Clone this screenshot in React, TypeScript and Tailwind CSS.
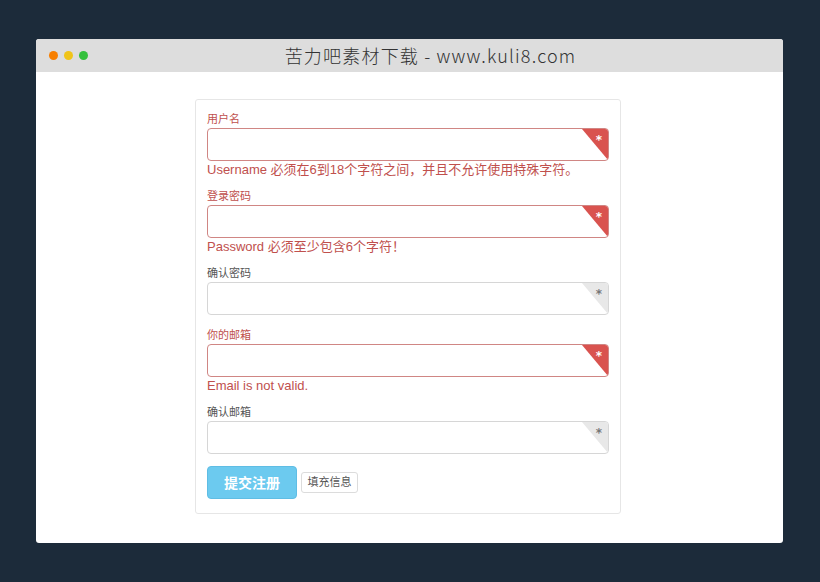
import React from "react";

const font = { fontFamily: '"Liberation Sans",Arial,"Noto Sans CJK SC",sans-serif' };

function Field({ label, error, required }: { label: string; error?: string; required: boolean }) {
  const bad = !!error;
  return (
    <div className="mb-[13px]">
      <div className={`text-[11px] leading-[14px] mb-[2px] ${bad ? "text-[#c0504d]" : "text-[#555]"}`}>{label}</div>
      <div
        className={`relative h-[33px] rounded-[4px] border bg-white overflow-hidden ${
          bad ? "border-[#d08684]" : "border-[#d6d6d6]"
        }`}
      >
        <div
          className={`absolute right-0 top-0 w-[26px] h-[31px] ${bad ? "bg-[#d9534f]" : "bg-[#e8e8e8]"}`}
          style={{ clipPath: "polygon(0 0,100% 0,100% 100%)" }}
        />
        <div
          className={`absolute right-[6px] top-[5px] text-[12px] leading-[12px] font-bold ${
            bad ? "text-white" : "text-[#777]"
          }`}
          style={{ fontFamily: '"DejaVu Sans",sans-serif' }}
        >
          *
        </div>
      </div>
      {error && <div className="text-[13px] leading-[16px] mt-[1px] -mb-[2px] text-[#c0504d]">{error}</div>}
    </div>
  );
}

export default function App() {
  return (
    <div className="w-[820px] h-[582px] bg-[#1c2b3a] pt-[39px] pl-[36px]" style={font}>
      <div className="w-[747px] h-[504px] bg-white rounded-[3px] overflow-hidden flex flex-col">
        <div className="h-[33px] bg-[#dddddd] relative flex items-center justify-center shrink-0">
          <div className="absolute left-[13px] top-[12px] flex gap-[6px]">
            <span className="w-[9px] h-[9px] rounded-full bg-[#f77f00]" />
            <span className="w-[9px] h-[9px] rounded-full bg-[#f0c419]" />
            <span className="w-[9px] h-[9px] rounded-full bg-[#34c03c]" />
          </div>
          <span
            className="text-[18px] text-[#333] tracking-[1.2px] ml-[42px]"
            style={{ fontFamily: '"Noto Sans CJK SC",sans-serif', fontWeight: 300 }}
          >
            苦力吧素材下载 - www.kuli8.com
          </span>
        </div>
        <div className="pl-[159px] pt-[27px]">
          <div className="w-[426px] border border-[#e6e6e6] rounded-[3px] pt-[12px] px-[11px] pb-[14px]">
            <Field label="用户名" required error="Username 必须在6到18个字符之间，并且不允许使用特殊字符。" />
            <Field label="登录密码" required error="Password 必须至少包含6个字符！" />
            <Field label="确认密码" required={false} />
            <Field label="你的邮箱" required error="Email is not valid." />
            <Field label="确认邮箱" required={false} />
            <div className="flex items-center gap-[4px] -mt-px">
              <button
                className="w-[90px] h-[33px] rounded-[4px] bg-[#6ccaef] text-white text-[14px] font-bold border border-[#5fbde4]"
                style={{ fontFamily: '"Noto Sans CJK SC",sans-serif' }}
              >
                提交注册
              </button>
              <button className="w-[57px] h-[21px] rounded-[3px] bg-white border border-[#dcdcdc] text-[11px] text-[#555]">
                填充信息
              </button>
            </div>
          </div>
        </div>
      </div>
    </div>
  );
}
